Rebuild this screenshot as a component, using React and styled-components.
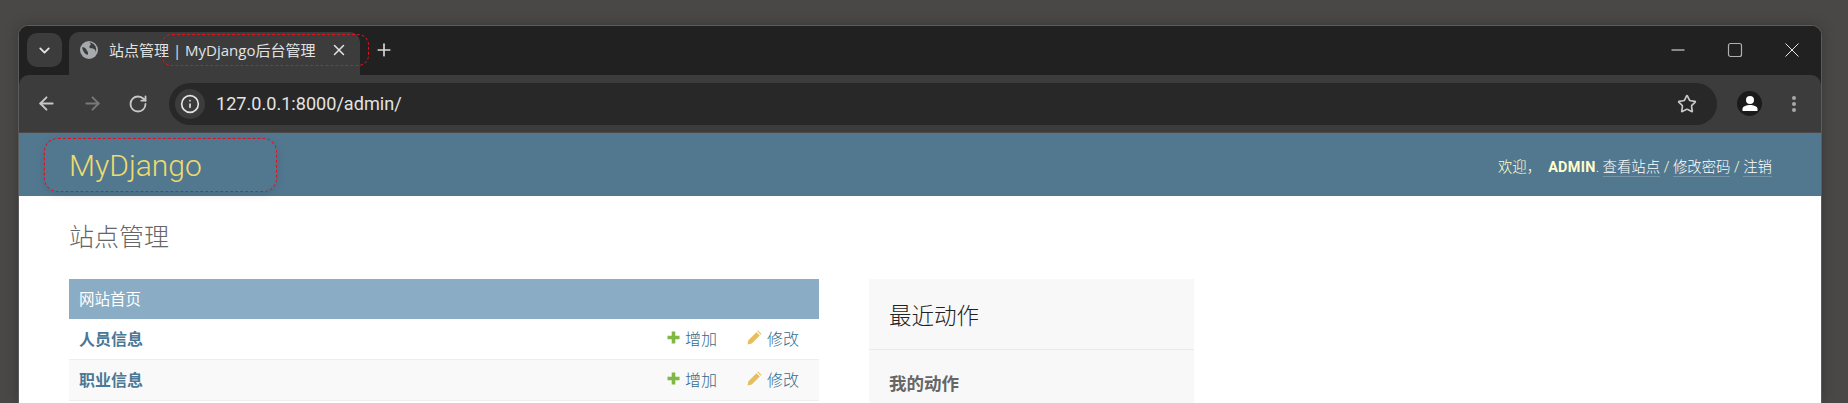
import React from "react";
import styled, { createGlobalStyle } from "styled-components";
import { ChevronDown, X, Plus, ArrowLeft, ArrowRight, RotateCw, Info, Star } from "lucide-react";

const UI_FONT = `"Roboto", "Noto Sans CJK SC", sans-serif`;
const CHROME_FONT = `"Open Sans", "Noto Sans CJK SC", sans-serif`;

const GlobalStyle = createGlobalStyle`
  html, body {
    margin: 0;
    height: 403px;
    overflow: hidden;
    background: #4a4846;
    font-family: ${UI_FONT};
  }
  * { box-sizing: border-box; }
`;

const Desktop = styled.div`
  height: 403px;
  padding: 25px 26px 0 18px;
  background: #4a4846;
`;

const Window = styled.div`
  height: 378px;
  display: flex;
  flex-direction: column;
  border-radius: 10px 10px 0 0;
  border: 1px solid #5c5b59;
  border-bottom: none;
  overflow: hidden;
  background: #202120;
  box-shadow: 0 0 14px rgba(0, 0, 0, 0.22);
`;

const TabStrip = styled.div`
  height: 49px;
  flex: none;
  display: flex;
  align-items: flex-start;
  padding: 7px 0 0 8px;
  position: relative;
  background: #202120;
`;

const TabSearch = styled.button`
  width: 35px;
  height: 34px;
  border: none;
  border-radius: 10px;
  background: #3c3c3c;
  color: #e3e3e3;
  display: flex;
  align-items: center;
  justify-content: center;
  padding: 0;
`;

const Tab = styled.div`
  width: 291px;
  height: 43px;
  margin: -1px 0 0 7px;
  padding: 0 12px 8px 11px;
  display: flex;
  align-items: center;
  background: #3c3c3c;
  border-radius: 10px 10px 0 0;
  color: #e3e3e3;
  font-family: ${CHROME_FONT};
  font-size: 15px;
  white-space: nowrap;
`;

const TabTitle = styled.span`
  margin-left: 11px;
  flex: 1;
`;

const NewTab = styled.div`
  margin: 7px 0 0 14px;
  color: #d8d8d8;
  display: flex;
`;

const WindowControls = styled.div`
  margin-left: auto;
  display: flex;
  align-items: center;
  height: 34px;
  gap: 37px;
  padding-right: 19px;
`;

const Note = styled.div`
  position: absolute;
  border: 1px dashed #e0121e;
  border-radius: ${(p) => p.$radius}px;
  left: ${(p) => p.$left}px;
  top: ${(p) => p.$top}px;
  width: ${(p) => p.$width}px;
  height: ${(p) => p.$height}px;
  box-shadow: ${(p) => (p.$soft ? "0 2px 10px rgba(0, 0, 0, 0.12)" : "none")};
  pointer-events: none;
`;

const Toolbar = styled.div`
  height: 58px;
  flex: none;
  display: flex;
  align-items: center;
  padding: 0 18px 0 17px;
  background: #3c3c3c;
  border-radius: 10px 10px 0 0;
  border-bottom: 1px solid #4a4a4a;
  color: #c7c7c7;
`;

const NavIcons = styled.div`
  display: flex;
  align-items: center;
  gap: 25px;
  margin-right: 21px;
`;

const NavButton = styled.span`
  display: flex;
  color: ${(p) => (p.$off ? "#787878" : "#c7c7c7")};
`;

const Omnibox = styled.div`
  flex: 1;
  height: 42px;
  border-radius: 21px;
  background: #282828;
  display: flex;
  align-items: center;
  padding: 0 20px 0 6px;
`;

const SiteInfo = styled.span`
  width: 30px;
  height: 30px;
  border-radius: 50%;
  background: #3c3c3c;
  color: #e3e3e3;
  display: flex;
  align-items: center;
  justify-content: center;
`;

const Url = styled.span`
  margin-left: 11px;
  flex: 1;
  font-size: 18.1px;
  color: #e3e3e3;
`;

const Avatar = styled.span`
  width: 25px;
  height: 25px;
  margin-left: 20px;
  border-radius: 50%;
  background: #1b1b1b;
  display: flex;
  align-items: center;
  justify-content: center;
`;

const Kebab = styled.span`
  margin-left: 23px;
  display: flex;
`;

const Page = styled.div`
  flex: 1;
  background: #fff;
  overflow: hidden;
  position: relative;
`;

const Header = styled.div`
  height: 63px;
  padding: 2px 49px 0 50px;
  display: flex;
  align-items: center;
  justify-content: space-between;
  background: #527890;
  color: #ffc;
`;

const Branding = styled.h1`
  margin: 0;
  font-size: 30px;
  font-weight: 300;
  color: #eedb6c;
`;

const UserTools = styled.div`
  font-size: 14.4px;
  font-weight: 300;
  white-space: pre;
  strong {
    font-weight: 700;
    letter-spacing: 0.3px;
  }
  a {
    color: #fff;
    text-decoration: none;
    border-bottom: 1px solid rgba(255, 255, 255, 0.2);
  }
`;

const Content = styled.div`
  padding: 23px 50px 0;
`;

const Title = styled.h2`
  margin: 0 0 22px;
  font-size: 25px;
  line-height: 38px;
  font-weight: 300;
  color: #666;
`;

const Columns = styled.div`
  display: flex;
  align-items: flex-start;
  gap: 50px;
`;

const Module = styled.div`
  width: 750px;
  flex: none;
`;

const Caption = styled.div`
  height: 40px;
  padding: 0 10px 2px;
  display: flex;
  align-items: center;
  background: #8aacc4;
  color: #fff;
  font-size: 15.5px;
`;

const Row = styled.div`
  height: 41px;
  padding: 0 20px 3px 10px;
  display: flex;
  align-items: center;
  background: ${(p) => (p.$alt ? "#f9f9f9" : "#fff")};
  border-bottom: 1px solid #eee;
`;

const ModelName = styled.a`
  flex: 1;
  font-size: 16px;
  font-weight: 700;
  color: #4a7896;
`;

const RowLink = styled.a`
  display: flex;
  align-items: center;
  gap: 5px;
  margin-left: 30px;
  font-size: 16px;
  font-weight: 300;
  color: #336b8c;
`;

const Recent = styled.div`
  width: 325px;
  height: 130px;
  flex: none;
  background: #f8f8f8;
`;

const RecentTitle = styled.h2`
  margin: 0;
  height: 71px;
  padding: 0 20px;
  display: flex;
  align-items: center;
  font-size: 22.5px;
  font-weight: 300;
  color: #222;
  border-bottom: 1px solid #eaeaea;
`;

const RecentSub = styled.h3`
  margin: 20px 20px 0;
  font-size: 17.5px;
  font-weight: 700;
  color: #666;
`;

const PlusIcon = () => (
  <svg width="13" height="13" viewBox="0 0 13 13">
    <path d="M4.700 0.500h3.600v4.200h4.200v3.600H8.300v4.200H4.700V8.300H0.500V4.700h4.200z" fill="#7fb845" />
  </svg>
);

const PencilIcon = () => (
  <svg width="15" height="15" viewBox="0 0 15 15">
    <path d="M0.500 14.500l0.900-4.300 8-8 3.400 3.400-8 8z M10.300 1.300l0.800-0.800 3.400 3.400-0.800 0.800z" fill="#e8bd5c" />
  </svg>
);

const ProfileIcon = () => (
  <svg width="16" height="17" viewBox="0 0 16 17">
    <circle cx="8" cy="5" r="4" fill="#fff" />
    <path d="M0.500 16v-2.200C0.500 11.200 5 10 8 10s7.500 1.200 7.500 3.800V16z" fill="#fff" />
  </svg>
);

const GlobeIcon = () => (
  <svg width="18" height="18" viewBox="0 0 18 18">
    <circle cx="9" cy="9" r="9" fill="#a6a9ae" />
    <path d="M2 6.500c2-.5 3 .5 4 1.500s.5 2 1.500 2.500.5 2 0 3.500c-2-.5-4.500-3-5.500-7.500z" fill="#3c3c3c" />
    <path d="M9 1.500c1.500.5 2 1.500 1.500 2.500s-1.500 1-1 2.500 3 .5 4.500 1.500 2 2 1.500 4c1-2.500 1-6-1-8s-3.500-2.500-5.500-2.500z" fill="#3c3c3c" />
  </svg>
);

const MinimizeIcon = () => (
  <svg width="20" height="20" viewBox="0 0 20 20">
    <path d="M3.500 10h13" stroke="#f0f0f0" strokeWidth="1" />
  </svg>
);

const MaximizeIcon = () => (
  <svg width="20" height="20" viewBox="0 0 20 20">
    <rect x="3.500" y="3.500" width="13" height="13" rx="2" fill="none" stroke="#b0b0b0" strokeWidth="1.2" />
  </svg>
);

const CloseIcon = () => (
  <svg width="20" height="20" viewBox="0 0 20 20">
    <path d="M3.500 3.500l13 13M16.500 3.500l-13 13" stroke="#e8e8e8" strokeWidth="1" />
  </svg>
);

const DotsIcon = () => (
  <svg width="18" height="18" viewBox="0 0 18 18">
    <circle cx="9" cy="3" r="2" fill="#a8a8a8" />
    <circle cx="9" cy="9" r="2" fill="#a8a8a8" />
    <circle cx="9" cy="15" r="2" fill="#a8a8a8" />
  </svg>
);

const rows = [
  { name: "人员信息" },
  { name: "职业信息", alt: true },
];

export default function App() {
  return (
    <>
      <GlobalStyle />
      <Desktop>
        <Window>
          <TabStrip>
            <TabSearch><ChevronDown size={17} strokeWidth={2.6} /></TabSearch>
            <Tab>
              <GlobeIcon />
              <TabTitle>站点管理 | MyDjango后台管理</TabTitle>
              <X size={18} strokeWidth={2} />
            </Tab>
            <NewTab><Plus size={20} strokeWidth={2} /></NewTab>
            <WindowControls>
              <MinimizeIcon />
              <MaximizeIcon />
              <CloseIcon />
            </WindowControls>
            <Note $left={142} $top={8} $width={208} $height={32} $radius={11} />
          </TabStrip>
          <Toolbar>
            <NavIcons>
              <NavButton><ArrowLeft size={21} strokeWidth={2.2} /></NavButton>
              <NavButton $off><ArrowRight size={21} strokeWidth={2.2} /></NavButton>
              <NavButton><RotateCw size={20} strokeWidth={2.2} /></NavButton>
            </NavIcons>
            <Omnibox>
              <SiteInfo><Info size={20} strokeWidth={2} /></SiteInfo>
              <Url>127.0.0.1:8000/admin/</Url>
              <Star size={20} strokeWidth={2} color="#c7c7c7" />
            </Omnibox>
            <Avatar><ProfileIcon /></Avatar>
            <Kebab><DotsIcon /></Kebab>
          </Toolbar>
          <Page>
            <Header>
              <Branding>MyDjango</Branding>
              <UserTools>
                {"欢迎，  "}<strong>ADMIN</strong>{". "}<a>查看站点</a>{" / "}<a>修改密码</a>{" / "}<a>注销</a>
              </UserTools>
            </Header>
            <Note $soft $left={25} $top={5} $width={233} $height={54} $radius={14} />
            <Content>
              <Title>站点管理</Title>
              <Columns>
                <Module>
                  <Caption>网站首页</Caption>
                  {rows.map((row) => (
                    <Row key={row.name} $alt={row.alt}>
                      <ModelName>{row.name}</ModelName>
                      <RowLink><PlusIcon />增加</RowLink>
                      <RowLink><PencilIcon />修改</RowLink>
                    </Row>
                  ))}
                </Module>
                <Recent>
                  <RecentTitle>最近动作</RecentTitle>
                  <RecentSub>我的动作</RecentSub>
                </Recent>
              </Columns>
            </Content>
          </Page>
        </Window>
      </Desktop>
    </>
  );
}
